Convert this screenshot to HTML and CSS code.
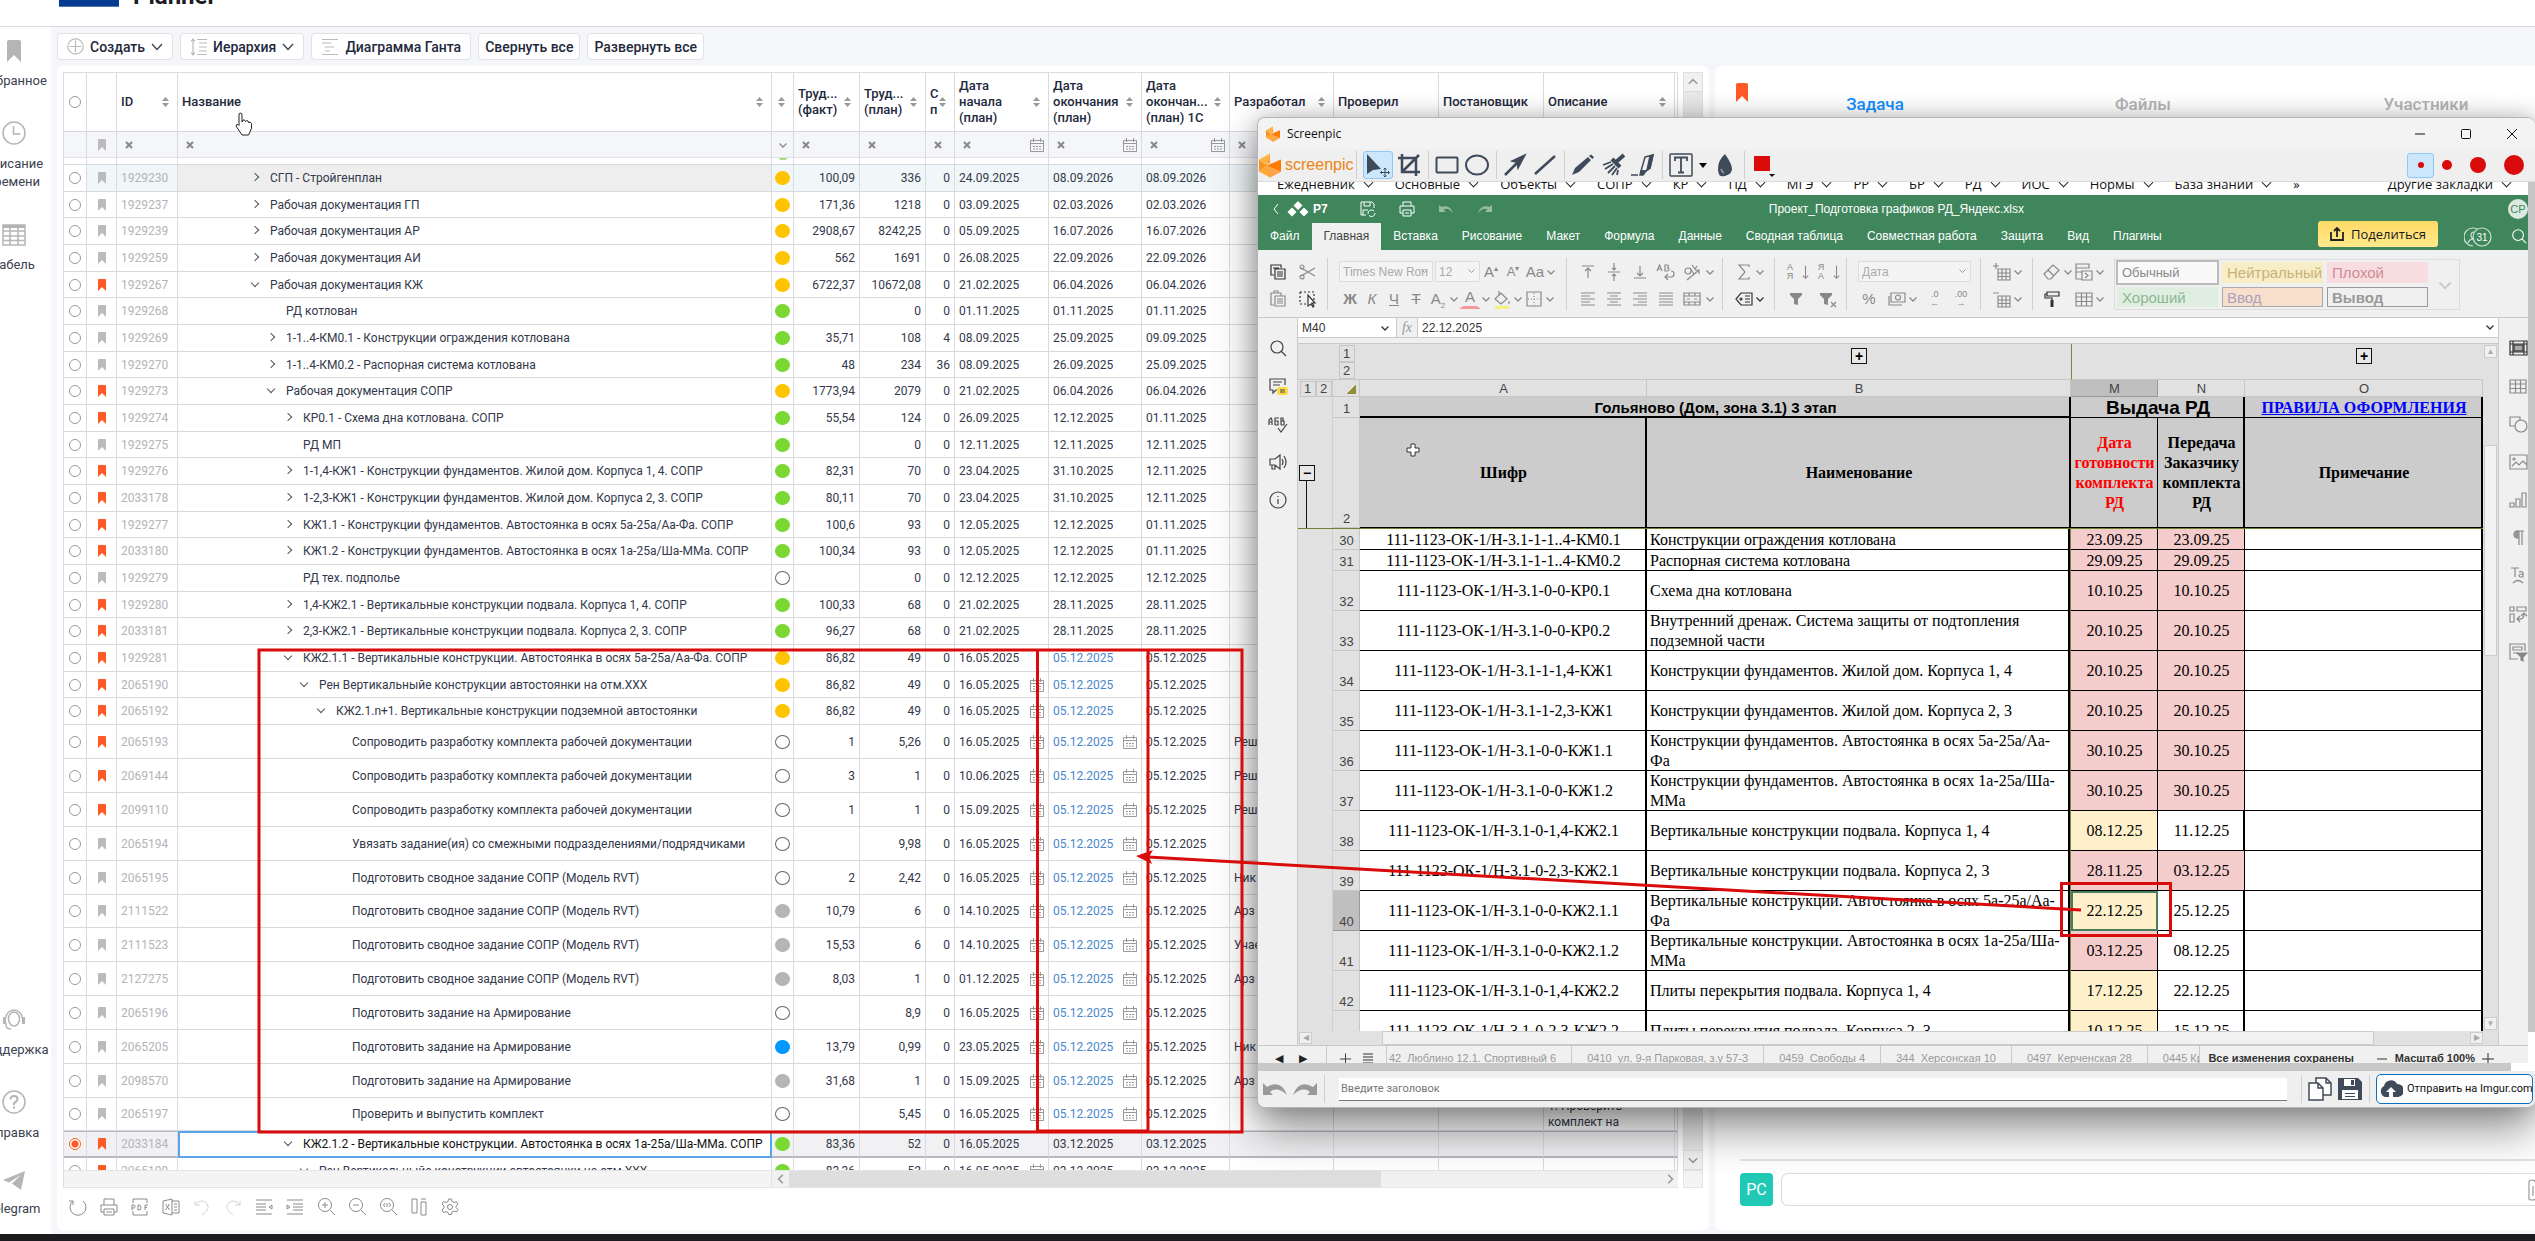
FILE: index.html
```html
<!DOCTYPE html>
<html lang="ru">
<head>
<meta charset="utf-8">
<title>Planner</title>
<link rel="stylesheet" href="styles.css">
</head>
<body>
<svg class="sprite" aria-hidden="true">
  <symbol id="mark" viewBox="0 0 14 22"><path d="M2 0h10q2 0 2 2v20l-7-7-7 7V2q0-2 2-2z" fill="currentColor"/></symbol>
  <symbol id="chev" viewBox="0 0 10 10"><path d="M1.500 3.500 5 7l3.500-3.500" fill="none" stroke="currentColor" stroke-width="1.300"/></symbol>
  <symbol id="hex" viewBox="0 0 22 24"><path d="M11 0 0 6l8 6z" fill="#ffb347"/><path d="M0 6v12l8-6z" fill="#f7931e"/><path d="M0 18l11 6-3-12z" fill="#ffa833"/><path d="M11 0v9l-3 3z" fill="#ff9b1f"/><path d="M8 12l14-6v12l-11 6z" fill="#ff7b00"/><path d="M8 12l14 6-11 6z" fill="#ffa64d"/></symbol>
  <symbol id="grid" viewBox="0 0 20 20"><path d="M2 4h16v13H2zM2 8h16M2 12.500h16M7.500 4v13M12.500 4v13" fill="none" stroke="currentColor" stroke-width="1.200"/></symbol>
  <symbol id="find" viewBox="0 0 20 20"><circle cx="9" cy="9" r="6" fill="none" stroke="currentColor" stroke-width="1.200"/><path d="M13.500 13.500 18 18" stroke="currentColor" stroke-width="1.200"/></symbol>
</svg>

<header class="top">
  <span class="logo"></span>
  <span class="brand">Planner</span>
</header>

<div class="app">
  <nav class="side">
    <a href="#"><svg width="14" height="22"><use href="#mark"/></svg>Избранное</a>
    <a href="#"><svg width="24" height="24" viewBox="0 0 24 24" fill="none" stroke="currentColor" stroke-width="1.500"><circle cx="12" cy="12" r="11"/><path d="M11.500 5v8h7"/></svg>Списание времени</a>
    <a href="#"><svg width="24" height="22" viewBox="0 0 24 22" fill="none" stroke="currentColor" stroke-width="1.500"><path d="M1 1h22v20H1zM1 7h22M1 12h22M1 16.500h22M8 4v17M16 4v17"/><path d="M1 2.500h22" stroke-width="3"/></svg>Табель</a>
    <span class="grow"></span>
    <a href="#"><svg width="24" height="22" viewBox="0 0 24 22" fill="none" stroke="currentColor" stroke-width="1.500"><ellipse cx="12" cy="10" rx="5.500" ry="7"/><path d="M4 9a8 8 0 0 1 16 0M4 14v2q0 4 5 4"/><path d="M2.500 8v7M21.500 8v7" stroke-width="3"/></svg>Поддержка</a>
    <a href="#"><svg width="24" height="24" viewBox="0 0 24 24" fill="none" stroke="currentColor" stroke-width="1.500"><circle cx="12" cy="12" r="11"/><path d="M8.500 9.500q0-3.500 3.500-3.500t3.500 3q0 2-2 3t-1.500 3" stroke-width="2"/><path d="M12 16.500v2" stroke-width="2"/></svg>Справка</a>
    <a href="#"><svg width="22" height="19" viewBox="0 0 22 19"><path d="M22 0 0 9l6 2.500L18 4 9 12.500l9 6.500z" fill="currentColor"/></svg>Telegram</a>
  </nav>

  <main class="work">
    <div class="actions">
      <button><svg width="17" height="17" viewBox="0 0 17 17" fill="none" stroke="#bbb" stroke-width="1.200"><circle cx="8.500" cy="8.500" r="7.700"/><path d="M8.500 2.500v12M2.500 8.500h12"/></svg><span>Создать</span><svg width="12" height="8" viewBox="0 0 12 8" fill="none" stroke="#3c4150" stroke-width="1.300"><path d="M1 1l5 5.500L11 1"/></svg></button>
      <button><svg width="17" height="18" viewBox="0 0 17 18" fill="none" stroke="#bbb" stroke-width="1.200"><path d="M3 1v16M1 3.500 3 1l2 2.500M1 14.500 3 17l2-2.500M7 1.500h10M9 5h8M9 9h8M9 13h8M7 16.500h10"/></svg><span>Иерархия</span><svg width="12" height="8" viewBox="0 0 12 8" fill="none" stroke="#3c4150" stroke-width="1.300"><path d="M1 1l5 5.500L11 1"/></svg></button>
      <button><svg width="18" height="18" viewBox="0 0 18 18" fill="none" stroke="#bbb" stroke-width="1.200"><path d="M1 1.500h16M1 5h9M4 9h9M4 13h5M1 16.500h16"/></svg><span>Диаграмма Ганта</span></button>
      <button class="plain">Свернуть все</button>
      <button class="plain">Развернуть все</button>
    </div>
    <div class="panels">
      <section class="tasks">
        <div class="gridbox">
          <div class="gridclip">
            <table class="gantt">
              <colgroup><col class="w23"><col class="w30"><col class="w61"><col><col class="w22"><col class="w66"><col class="w66"><col class="w29"><col class="w94"><col class="w93"><col class="w88"><col class="w104"><col class="w105"><col class="w105"><col class="w131"><col class="w3"></colgroup>
              <thead>
                <tr class="heads"><th><input type="radio" name="all" aria-label="Все"><th><th class="so">ID<th class="so">Название<th class="so"><th class="so">Труд...<br>(факт)<th class="so">Труд...<br>(план)<th class="so">С<br>п<th class="so">Дата<br>начала<br>(план)<th class="so">Дата<br>окончания<br>(план)<th class="so">Дата<br>окончан...<br>(план) 1С<th class="so">Разработал<th>Проверил<th>Постановщик<th class="so">Описание<th>
                <tr class="filters"><td><td class="bm"><td class="fx"><td class="fx"><td class="fv"><svg width="10" height="10"><use href="#chev"/></svg><td class="fx"><td class="fx"><td class="fx"><td class="fx c"><td class="fx c"><td class="fx c"><td class="fx"><td class="fx"><td class="fx"><td class="fx"><td>
              </thead>
              <tbody>
                <tr class="gap"><td><td><td><td><td><span class="sliver"></span><td><td><td><td><td><td><td><td><td><td>
                <tr class="hover"><td><input type="radio" name="row" aria-label="1929230"><td class="bm"><td class="id">1929230<td class="l0 shut">СГП - Стройгенплан<td class="s y"><td class="n">100,09<td class="n">336<td class="n">0<td>24.09.2025<td>08.09.2026<td>08.09.2026<td><td><td><td><td>
                <tr><td><input type="radio" name="row" aria-label="1929237"><td class="bm"><td class="id">1929237<td class="l0 shut">Рабочая документация ГП<td class="s y"><td class="n">171,36<td class="n">1218<td class="n">0<td>03.09.2025<td>02.03.2026<td>02.03.2026<td><td><td><td><td>
                <tr><td><input type="radio" name="row" aria-label="1929239"><td class="bm"><td class="id">1929239<td class="l0 shut">Рабочая документация АР<td class="s y"><td class="n">2908,67<td class="n">8242,25<td class="n">0<td>05.09.2025<td>16.07.2026<td>16.07.2026<td><td><td><td><td>
                <tr><td><input type="radio" name="row" aria-label="1929259"><td class="bm"><td class="id">1929259<td class="l0 shut">Рабочая документация АИ<td class="s y"><td class="n">562<td class="n">1691<td class="n">0<td>26.08.2025<td>22.09.2026<td>22.09.2026<td><td><td><td><td>
                <tr><td><input type="radio" name="row" aria-label="1929267"><td class="bm on"><td class="id">1929267<td class="l0 open">Рабочая документация КЖ<td class="s y"><td class="n">6722,37<td class="n">10672,08<td class="n">0<td>21.02.2025<td>06.04.2026<td>06.04.2026<td><td><td><td><td>
                <tr><td><input type="radio" name="row" aria-label="1929268"><td class="bm"><td class="id">1929268<td class="l1">РД котлован<td class="s g"><td class="n"><td class="n">0<td class="n">0<td>01.11.2025<td>01.11.2025<td>01.11.2025<td><td><td><td><td>
                <tr><td><input type="radio" name="row" aria-label="1929269"><td class="bm"><td class="id">1929269<td class="l1 shut">1-1..4-КМ0.1 - Конструкции ограждения котлована<td class="s g"><td class="n">35,71<td class="n">108<td class="n">4<td>08.09.2025<td>25.09.2025<td>09.09.2025<td><td><td><td><td>
                <tr><td><input type="radio" name="row" aria-label="1929270"><td class="bm"><td class="id">1929270<td class="l1 shut">1-1..4-КМ0.2 - Распорная система котлована<td class="s g"><td class="n">48<td class="n">234<td class="n">36<td>08.09.2025<td>26.09.2025<td>25.09.2025<td><td><td><td><td>
                <tr><td><input type="radio" name="row" aria-label="1929273"><td class="bm on"><td class="id">1929273<td class="l1 open">Рабочая документация СОПР<td class="s y"><td class="n">1773,94<td class="n">2079<td class="n">0<td>21.02.2025<td>06.04.2026<td>06.04.2026<td><td><td><td><td>
                <tr><td><input type="radio" name="row" aria-label="1929274"><td class="bm on"><td class="id">1929274<td class="l2 shut">КР0.1 - Схема дна котлована. СОПР<td class="s g"><td class="n">55,54<td class="n">124<td class="n">0<td>26.09.2025<td>12.12.2025<td>01.11.2025<td><td><td><td><td>
                <tr><td><input type="radio" name="row" aria-label="1929275"><td class="bm"><td class="id">1929275<td class="l2">РД МП<td class="s g"><td class="n"><td class="n">0<td class="n">0<td>12.11.2025<td>12.11.2025<td>12.11.2025<td><td><td><td><td>
                <tr><td><input type="radio" name="row" aria-label="1929276"><td class="bm on"><td class="id">1929276<td class="l2 shut">1-1,4-КЖ1 - Конструкции фундаментов. Жилой дом. Корпуса 1, 4. СОПР<td class="s g"><td class="n">82,31<td class="n">70<td class="n">0<td>23.04.2025<td>31.10.2025<td>12.11.2025<td><td><td><td><td>
                <tr><td><input type="radio" name="row" aria-label="2033178"><td class="bm on"><td class="id">2033178<td class="l2 shut">1-2,3-КЖ1 - Конструкции фундаментов. Жилой дом. Корпуса 2, 3. СОПР<td class="s g"><td class="n">80,11<td class="n">70<td class="n">0<td>23.04.2025<td>31.10.2025<td>12.11.2025<td><td><td><td><td>
                <tr><td><input type="radio" name="row" aria-label="1929277"><td class="bm on"><td class="id">1929277<td class="l2 shut">КЖ1.1 - Конструкции фундаментов. Автостоянка в осях 5а-25а/Аа-Фа. СОПР<td class="s g"><td class="n">100,6<td class="n">93<td class="n">0<td>12.05.2025<td>12.12.2025<td>01.11.2025<td><td><td><td><td>
                <tr><td><input type="radio" name="row" aria-label="2033180"><td class="bm on"><td class="id">2033180<td class="l2 shut">КЖ1.2 - Конструкции фундаментов. Автостоянка в осях 1а-25а/Ша-ММа. СОПР<td class="s g"><td class="n">100,34<td class="n">93<td class="n">0<td>12.05.2025<td>12.12.2025<td>01.11.2025<td><td><td><td><td>
                <tr><td><input type="radio" name="row" aria-label="1929279"><td class="bm"><td class="id">1929279<td class="l2">РД тех. подполье<td class="s"><td class="n"><td class="n">0<td class="n">0<td>12.12.2025<td>12.12.2025<td>12.12.2025<td><td><td><td><td>
                <tr><td><input type="radio" name="row" aria-label="1929280"><td class="bm on"><td class="id">1929280<td class="l2 shut">1,4-КЖ2.1 - Вертикальные конструкции подвала. Корпуса 1, 4. СОПР<td class="s g"><td class="n">100,33<td class="n">68<td class="n">0<td>21.02.2025<td>28.11.2025<td>28.11.2025<td><td><td><td><td>
                <tr><td><input type="radio" name="row" aria-label="2033181"><td class="bm on"><td class="id">2033181<td class="l2 shut">2,3-КЖ2.1 - Вертикальные конструкции подвала. Корпуса 2, 3. СОПР<td class="s g"><td class="n">96,27<td class="n">68<td class="n">0<td>21.02.2025<td>28.11.2025<td>28.11.2025<td><td><td><td><td>
                <tr><td><input type="radio" name="row" aria-label="1929281"><td class="bm on"><td class="id">1929281<td class="l2 open">КЖ2.1.1 - Вертикальные конструкции. Автостоянка в осях 5а-25а/Аа-Фа. СОПР<td class="s y"><td class="n">86,82<td class="n">49<td class="n">0<td>16.05.2025<td class="k">05.12.2025<td>05.12.2025<td><td><td><td><td>
                <tr><td><input type="radio" name="row" aria-label="2065190"><td class="bm on"><td class="id">2065190<td class="l3 open">Рен Вертикальныйе конструкции автостоянки на отм.ХХХ<td class="s y"><td class="n">86,82<td class="n">49<td class="n">0<td class="c">16.05.2025<td class="k">05.12.2025<td>05.12.2025<td><td><td><td><td>
                <tr><td><input type="radio" name="row" aria-label="2065192"><td class="bm on"><td class="id">2065192<td class="l4 open">КЖ2.1.n+1. Вертикальные конструкции подземной автостоянки<td class="s y"><td class="n">86,82<td class="n">49<td class="n">0<td class="c">16.05.2025<td class="k">05.12.2025<td>05.12.2025<td><td><td><td><td>
              </tbody>
              <tbody class="tall">
                <tr><td><input type="radio" name="row" aria-label="2065193"><td class="bm on"><td class="id">2065193<td class="l5">Сопроводить разработку комплекта рабочей документации<td class="s"><td class="n">1<td class="n">5,26<td class="n">0<td class="c">16.05.2025<td class="k c">05.12.2025<td>05.12.2025<td>Реш<td><td><td><td>
                <tr><td><input type="radio" name="row" aria-label="2069144"><td class="bm on"><td class="id">2069144<td class="l5">Сопроводить разработку комплекта рабочей документации<td class="s"><td class="n">3<td class="n">1<td class="n">0<td class="c">10.06.2025<td class="k c">05.12.2025<td>05.12.2025<td>Реш<td><td><td><td>
                <tr><td><input type="radio" name="row" aria-label="2099110"><td class="bm on"><td class="id">2099110<td class="l5">Сопроводить разработку комплекта рабочей документации<td class="s"><td class="n">1<td class="n">1<td class="n">0<td class="c">15.09.2025<td class="k c">05.12.2025<td>05.12.2025<td>Реш<td><td><td><td>
                <tr><td><input type="radio" name="row" aria-label="2065194"><td class="bm"><td class="id">2065194<td class="l5">Увязать задание(ия) со смежными подразделениями/подрядчиками<td class="s"><td class="n"><td class="n">9,98<td class="n">0<td class="c">16.05.2025<td class="k c">05.12.2025<td>05.12.2025<td><td><td><td><td>
                <tr><td><input type="radio" name="row" aria-label="2065195"><td class="bm"><td class="id">2065195<td class="l5">Подготовить сводное задание СОПР (Модель RVT)<td class="s"><td class="n">2<td class="n">2,42<td class="n">0<td class="c">16.05.2025<td class="k c">05.12.2025<td>05.12.2025<td>Ник<td><td><td><td>
                <tr><td><input type="radio" name="row" aria-label="2111522"><td class="bm"><td class="id">2111522<td class="l5">Подготовить сводное задание СОПР (Модель RVT)<td class="s x"><td class="n">10,79<td class="n">6<td class="n">0<td class="c">14.10.2025<td class="k c">05.12.2025<td>05.12.2025<td>Арз<td><td><td><td>
                <tr><td><input type="radio" name="row" aria-label="2111523"><td class="bm"><td class="id">2111523<td class="l5">Подготовить сводное задание СОПР (Модель RVT)<td class="s x"><td class="n">15,53<td class="n">6<td class="n">0<td class="c">14.10.2025<td class="k c">05.12.2025<td>05.12.2025<td>Учае<td><td><td><td>
                <tr><td><input type="radio" name="row" aria-label="2127275"><td class="bm"><td class="id">2127275<td class="l5">Подготовить сводное задание СОПР (Модель RVT)<td class="s x"><td class="n">8,03<td class="n">1<td class="n">0<td class="c">01.12.2025<td class="k c">05.12.2025<td>05.12.2025<td>Арз<td><td><td><td>
                <tr><td><input type="radio" name="row" aria-label="2065196"><td class="bm"><td class="id">2065196<td class="l5">Подготовить задание на Армирование<td class="s"><td class="n"><td class="n">8,9<td class="n">0<td class="c">16.05.2025<td class="k c">05.12.2025<td>05.12.2025<td><td><td><td><td>
                <tr><td><input type="radio" name="row" aria-label="2065205"><td class="bm"><td class="id">2065205<td class="l5">Подготовить задание на Армирование<td class="s blue"><td class="n">13,79<td class="n">0,99<td class="n">0<td class="c">23.05.2025<td class="k c">05.12.2025<td>05.12.2025<td>Ник<td><td><td><td>
                <tr><td><input type="radio" name="row" aria-label="2098570"><td class="bm"><td class="id">2098570<td class="l5">Подготовить задание на Армирование<td class="s x"><td class="n">31,68<td class="n">1<td class="n">0<td class="c">15.09.2025<td class="k c">05.12.2025<td>05.12.2025<td>Арз<td><td><td><td>
                <tr><td><input type="radio" name="row" aria-label="2065197"><td class="bm"><td class="id">2065197<td class="l5">Проверить и выпустить комплект<td class="s"><td class="n"><td class="n">5,45<td class="n">0<td class="c">16.05.2025<td class="k c">05.12.2025<td>05.12.2025<td><td><td><td>1. Проверить<br>комплект на<td>
              </tbody>
              <tbody>
                <tr class="sel"><td><input type="radio" name="row" aria-label="2033184" checked><td class="bm on"><td class="id">2033184<td class="l2 open cur">КЖ2.1.2 - Вертикальные конструкции. Автостоянка в осях 1а-25а/Ша-ММа. СОПР<td class="s g"><td class="n">83,36<td class="n">52<td class="n">0<td>16.05.2025<td>03.12.2025<td>03.12.2025<td><td><td><td><td>
                <tr><td><input type="radio" name="row" aria-label="2065199"><td class="bm on"><td class="id">2065199<td class="l3 open">Рен Вертикальныйе конструкции автостоянки на отм.ХХХ<td class="s g"><td class="n">83,36<td class="n">52<td class="n">0<td class="c">16.05.2025<td>03.12.2025<td>03.12.2025<td><td><td><td><td>
              </tbody>
            </table>
          </div>
          <div class="vbar"><button aria-label="Вверх"><svg class="up" width="12" height="12"><use href="#chev"/></svg></button><span class="vthumb"></span><button aria-label="Вниз"><svg width="12" height="12"><use href="#chev"/></svg></button></div>
        </div>
        <div class="hbox">
          <div class="hbar"><span class="hstart"></span><button aria-label="Влево"><svg class="lf" width="12" height="12"><use href="#chev"/></svg></button><span class="hthumb"></span><span class="grow"></span><button aria-label="Вправо"><svg class="rt" width="12" height="12"><use href="#chev"/></svg></button></div>
          <span class="corner"></span>
        </div>
        <div class="tools">
          <svg viewBox="0 0 20 20"><path d="M5 4a8 8 0 1 0 10 0M5 8V4H1"/></svg>
          <svg viewBox="0 0 20 20"><path d="M5 8V2h10v6M5 15H2V8h16v7h-3M5 12h10v6H5zM7 15h6"/></svg>
          <svg viewBox="0 0 20 20"><path d="M3 6V2h14v4M3 14v4h14v-4"/><path d="M2 13V8h2q1 0 1 1.500T4 11H2M8 8v5h1q2 0 2-2.500T9 8zM15 13V8h3M15 10.500h2"/></svg>
          <svg viewBox="0 0 20 20"><path d="M11 2 2 4v12l9 2zM11 4h7v12h-7M4.500 7l4 6M8.500 7l-4 6M13 7h3M13 10h3M13 13h3"/></svg>
          <svg class="dim" viewBox="0 0 20 20"><path d="M3 4v4h5M3 8q4-5 8-4t5 5-6 9"/></svg>
          <svg class="dim" viewBox="0 0 20 20"><path d="M17 4v4h-5M17 8q-4-5-8-4T4 9t6 9"/></svg>
          <svg viewBox="0 0 20 20"><path d="M2 3h16M2 7h10M2 10h10M2 13h10M2 17h16M18 8l-3 2 3 2z"/></svg>
          <svg viewBox="0 0 20 20"><path d="M2 3h16M8 7h10M8 10h10M8 13h10M2 17h16M2 8l3 2-3 2z"/></svg>
          <svg viewBox="0 0 20 20"><circle cx="9" cy="8" r="6.500"/><path d="M14 13l5 5M9 5v6M6 8h6"/></svg>
          <svg viewBox="0 0 20 20"><circle cx="9" cy="8" r="6.500"/><path d="M14 13l5 5M6 8h6"/></svg>
          <svg viewBox="0 0 20 20"><circle cx="9" cy="8" r="6.500"/><path d="M14 13l5 5M7 6 5.500 8 7 10M11 6l1.500 2L11 10M9 6v4"/></svg>
          <svg viewBox="0 0 20 20"><path d="M3 2h5v14H3zM12 5h5v13h-5zM12 2h5"/></svg>
          <svg viewBox="0 0 20 20"><circle cx="10" cy="10" r="2.500"/><path d="M8.500 2h3l.5 2.500 2 1 2.500-1 1.500 2.500-2 2v1.500l2 2-1.500 2.500-2.500-1-2 1-.5 2.500h-3L8 15.500l-2-1-2.500 1L2 13l2-2V9L2 7l1.500-2.500 2.500 1 2-1z"/></svg>
        </div>
      </section>
      <aside class="detail">
        <div class="dhead">
          <svg class="flag" width="12" height="21"><use href="#mark"/></svg>
          <nav class="dtabs"><a class="act" href="#">Задача</a><a href="#">Файлы</a><a href="#">Участники</a></nav>
        </div>
        <div class="comment">
          <span class="ava">PC</span>
          <input type="text" aria-label="Комментарий">
          <svg class="clip" width="9" height="22" viewBox="0 0 9 22" fill="none" stroke="#999" stroke-width="1.200"><path d="M1 3q0-2 3-2t4 3v15q0 2-4 2T1 18zM5 7v10"/></svg>
        </div>
      </aside>
    </div>
  </main>
</div>
<div class="dock"></div>

<section class="win" aria-label="Screenpic">
  <div class="caption"><svg width="14" height="16"><use href="#hex"/></svg><span>Screenpic</span>
    <button aria-label="Свернуть"><svg viewBox="0 0 12 12"><path d="M1 6h10"/></svg></button>
    <button aria-label="Развернуть"><svg viewBox="0 0 12 12"><rect x="1.500" y="1.500" width="9" height="9" rx="1"/></svg></button>
    <button aria-label="Закрыть"><svg viewBox="0 0 12 12"><path d="M1 1l10 10M11 1 1 11"/></svg></button>
  </div>
  <div class="paint">
    <svg class="ph" width="22" height="25"><use href="#hex"/></svg><span class="pname">screenpic</span><i></i>
    <button class="on" aria-label="Выбор"><svg width="30" height="28" viewBox="0 0 30 28"><path d="M4 3v20l6-4 8-1z" fill="#3f4a5a"/><path d="M22 17v9M17.500 21.500h9M20.500 18.500 22 17l1.500 1.500M20.500 24.500 22 26l1.500-1.500M19 20l-1.500 1.500L19 23M25 20l1.500 1.500L25 23" fill="none" stroke="#3f4a5a"/></svg></button>
    <svg class="gl" viewBox="0 0 24 24"><path d="M5 1v18h18M1 5h18v18M5 19 22 2" stroke-width="2.500"/></svg><i></i>
    <svg class="gl" viewBox="0 0 24 24"><rect x="1.500" y="4.500" width="21" height="15" rx="1" stroke-width="2"/></svg>
    <svg class="gl" viewBox="0 0 24 24"><ellipse cx="12" cy="12" rx="11" ry="9.500" stroke-width="2"/></svg><i></i>
    <svg class="gl" viewBox="0 0 24 24"><path d="M2 22 16 8" stroke-width="2.500"/><path d="M22 2 9 8l4 1 1 1 1 5z" fill="#3f4a5a"/></svg>
    <svg class="gl" viewBox="0 0 24 24"><path d="M2 21 22 3" stroke-width="2.500"/></svg><i></i>
    <svg class="gl" viewBox="0 0 24 24"><path d="M1 22l3-7 13-11 3 3L8 19zM18 3l2-1.500L23 4l-1.500 2z" fill="#3f4a5a" stroke="none"/></svg>
    <svg class="gl" viewBox="0 0 24 24"><path d="M23 2 15 9M11 6l8 8" stroke-width="4"/><path d="M10 9 2 12M12 11l-8 5M14 13l-7 7M16 15l-5 7M17 17l-1 5" stroke-width="1.800"/></svg>
    <svg class="gl" viewBox="0 0 24 24"><path d="M14 4l8-2-3 13-4 3h-5z"/><path d="M19 3l3-1-3 13-3 2zM10 18h5l-3 4H9z" fill="#3f4a5a"/><path d="M0 22h7" stroke-width="1.500"/></svg><i></i>
    <svg class="gl" viewBox="0 0 24 24"><rect x="1" y="1" width="22" height="22" rx="1"/><path d="M6 8V4.500h12V8M12 4.500v15M9 19.500h6" stroke-width="1.800"/></svg>
    <svg class="car" viewBox="0 0 8 5"><path d="M0 0h8L4 5z"/></svg>
    <svg class="gl" viewBox="0 0 24 24"><path d="M12 1q7 10 7 15t-7 7-7-7T12 1z" fill="#3f4a5a" stroke="none"/><path d="M8 16q1 3 3 4" stroke="#9aa3b0"/></svg><i></i>
    <svg class="gl" viewBox="0 0 24 24"><rect x="3" y="3" width="16" height="15" fill="#d90b0b" stroke="none"/><path d="M18 21h6l-3 3z" fill="#111" stroke="none"/></svg>
    <span class="grow"></span>
    <button class="sz on" aria-label="1"><b class="d5"></b></button><b class="d10"></b><b class="d16"></b><b class="d20"></b>
  </div>

  <div class="shot">
    <div class="page">
      <div class="marks"><a href="#">Ежедневник</a><a href="#">Основные</a><a href="#">Объекты</a><a href="#">СОПР</a><a href="#">КР</a><a href="#">ПД</a><a href="#">МГЭ</a><a href="#">РР</a><a href="#">БР</a><a href="#">РД</a><a href="#">ИОС</a><a href="#">Нормы</a><a href="#">База знаний</a><a href="#" class="bare">»</a><span class="grow"></span><a href="#">Другие закладки</a></div>

      <div class="green">
        <div class="gtitle">
          <svg width="8" height="12" viewBox="0 0 8 12"><path d="M6 1 2 6l4 5"/></svg>
          <svg class="p7" width="22" height="16" viewBox="0 0 22 16"><path d="M11 0l4.500 4.500L11 9 6.500 4.500zM5 6.500l4.500 4.500L5 15.500.500 11zM17 6.500l4.500 4.500-4.500 4.500-4.500-4.500z" fill="#fff" stroke="none"/></svg>
          <b>Р7</b>
          <svg class="gsave" width="16" height="16" viewBox="0 0 16 16"><path d="M6 14H1V1h11l2 2v4M4 1v4h6V1M3 14V9h5"/><path d="M8 13a3.500 3.500 0 0 1 6-3M15 12a3.500 3.500 0 0 1-6 2.500"/></svg>
          <svg width="16" height="16" viewBox="0 0 16 16"><path d="M4 5V1h8v4M4 12H1V5h14v7h-3M4 9h8v6H4zM6 12h4"/></svg>
          <svg class="half" width="16" height="16" viewBox="0 0 16 16"><path d="M1 4v7h7L5.500 8.500Q10 6 15 12 12 3 3.500 6z" fill="#fff" stroke="none"/></svg>
          <svg class="half" width="16" height="16" viewBox="0 0 16 16"><path d="M15 4v7H8l2.500-2.500Q6 6 1 12 4 3 12.500 6z" fill="#fff" stroke="none"/></svg>
          <span class="fname">Проект_Подготовка графиков РД_Яндекс.xlsx</span>
          <span class="cp">СР</span>
        </div>
        <nav class="gtabs"><a href="#">Файл</a><a class="act" href="#">Главная</a><a href="#">Вставка</a><a href="#">Рисование</a><a href="#">Макет</a><a href="#">Формула</a><a href="#">Данные</a><a href="#">Сводная таблица</a><a href="#">Совместная работа</a><a href="#">Защита</a><a href="#">Вид</a><a href="#">Плагины</a><span class="grow"></span>
          <button class="share"><svg width="14" height="14" viewBox="0 0 14 14" fill="none" stroke="#222" stroke-width="1.800"><path d="M1 5v8h12V5M7 10V2M4 4l3-3 3 3"/></svg>Поделиться</button>
          <svg class="usr" width="28" height="20" viewBox="0 0 28 20" fill="none" stroke="#cfe3d6" stroke-width="1.200"><path d="M9 19A9 9 0 0 1 9 1q3 0 5 1.500M10 5a3 3.500 0 1 0 0 7M4 16q1-4 6-4"/><circle cx="18" cy="10" r="9"/><text x="18" y="14" text-anchor="middle" class="u31">31</text></svg>
          <svg class="gs" width="18" height="18"><use href="#find"/></svg>
        </nav>
      </div>

      <div class="ribbon">
        <div class="grp g1"><div>
          <svg class="dk" viewBox="0 0 20 20"><path d="M6 13H3V3h10v3M5 6h6M7 7h10v10H7zM9 10h6M9 12h6M9 14h6"/></svg>
          <svg viewBox="0 0 20 20"><path d="M3 6l14 8M3 14l14-8"/><circle cx="4" cy="5" r="2"/><circle cx="4" cy="15" r="2"/></svg></div><div>
          <svg viewBox="0 0 20 20"><path d="M6 16H3V4h10v3M6 4V2h4v2M7 7h10v10H7zM9 10h6M9 12h6M9 14h6"/></svg>
          <svg class="dk" viewBox="0 0 20 20"><path d="M2 3h14v8M2 3v12h8" stroke-dasharray="2 2"/><path d="M10 6v11l3-2 2 3 1-1-2-3h3z" fill="#fff"/></svg></div></div>
        <div class="grp g2"><div>
          <select class="s94" aria-label="Шрифт"><option>Times New Ron</option></select><select class="s45" aria-label="Размер"><option>12</option></select>
          <span class="ch">A<sup>▴</sup></span><span class="ch sm">A<sup>▾</sup></span><span class="ch">Aa</span><svg class="cv"><use href="#chev"/></svg></div><div>
          <span class="ch"><b>Ж</b></span><span class="ch"><em>К</em></span><span class="ch"><u>Ч</u></span><span class="ch"><s>Т</s></span><span class="ch">A<sub>2</sub></span><svg class="cv"><use href="#chev"/></svg><span class="ch fr">A</span><svg class="cv"><use href="#chev"/></svg><span class="ch fy"><svg viewBox="0 0 20 20"><path d="M3 10l6-6 6 6-6 5zM7 2v5M17 12v3"/></svg></span><svg class="cv"><use href="#chev"/></svg><span class="ch"><svg viewBox="0 0 20 20"><path d="M3 3h14v14H3z"/><path d="M10 4v13M4 10h13" stroke-dasharray="1 2"/></svg></span><svg class="cv"><use href="#chev"/></svg></div></div>
        <div class="grp g3"><div>
          <svg viewBox="0 0 20 20"><path d="M4 4h12M10 6v10M7 9l3-3 3 3"/></svg><svg viewBox="0 0 20 20"><path d="M4 10h12M10 1v7M8 6l2 2 2-2M10 19v-7M8 14l2-2 2 2"/></svg><svg viewBox="0 0 20 20"><path d="M4 16h12M10 4v10M7 11l3 3 3-3"/></svg><svg viewBox="0 0 20 20"><path d="M1 9l2.500-6L6 9M2 7h3M9 3v6h2q2 0 2-1.500T11 6q1.500 0 1.500-1.500T11 3zM15 9q3 0 3 3t-3 3H9M12 12l-3 3 3 3"/></svg><svg viewBox="0 0 20 20"><circle cx="6" cy="9" r="3"/><path d="M8 6l4 6M10 3l3 4 2-3M5 18 17 8M17 12V8h-4"/></svg><svg class="cv"><use href="#chev"/></svg></div><div>
          <svg viewBox="0 0 20 20"><path d="M3 4h14M3 7h9M3 10h14M3 13h9M3 16h14"/></svg><svg viewBox="0 0 20 20"><path d="M3 4h14M6 7h8M3 10h14M6 13h8M3 16h14"/></svg><svg viewBox="0 0 20 20"><path d="M3 4h14M8 7h9M3 10h14M8 13h9M3 16h14"/></svg><svg viewBox="0 0 20 20"><path d="M3 4h14M3 7h14M3 10h14M3 13h14M3 16h14"/></svg><svg viewBox="0 0 20 20"><path d="M2 4h16v12H2zM2 7h16M2 13h16M7 4v3M13 4v3M7 13v3M13 13v3M5 10h3M12 10h3"/></svg><svg class="cv"><use href="#chev"/></svg></div></div>
        <div class="grp g4"><div><svg viewBox="0 0 20 20"><path d="M15 5V3H5l6 7-6 7h10v-2"/></svg><svg class="cv"><use href="#chev"/></svg></div><div class="dk"><svg class="dk" viewBox="0 0 20 20"><path d="M7 4h11v12H7l-5-6zM11 7h5M11 10h5M11 13h5"/><circle cx="7" cy="10" r="1"/></svg><svg class="cv"><use href="#chev"/></svg></div></div>
        <div class="grp g5"><div><span class="az">А<br>Я</span><svg class="ar" viewBox="0 0 10 20"><path d="M5 3v14M2 14l3 3 3-3"/></svg><span class="az">Я<br>А</span><svg class="ar" viewBox="0 0 10 20"><path d="M5 3v14M2 14l3 3 3-3"/></svg></div><div><svg viewBox="0 0 20 20"><path d="M4 4h12v2l-4 4v6l-4-1v-5L4 6z" fill="#888" stroke="none"/></svg><svg viewBox="0 0 20 20"><path d="M2 4h12v2l-4 4v6l-4-1v-5L2 6z" fill="#888" stroke="none"/><path d="M13 13l5 5M18 13l-5 5"/></svg></div></div>
        <div class="grp g6"><div><select class="s113" aria-label="Формат"><option>Дата</option></select></div><div><span class="ch">%</span><span class="duo"><svg viewBox="0 0 20 20"><path d="M4 4h14v9H4zM2 7v9h13"/><circle cx="11" cy="8.500" r="2.500"/></svg><svg class="cv"><use href="#chev"/></svg></span><span class="az">.0<br>←</span><span class="az">.00<br>→</span></div></div>
        <div class="grp g7"><div><svg viewBox="0 0 20 20"><path d="M6 7h12v11H6zM6 11h12M6 14.500h12M10 7v11M14 7v11M4 1v6M1 4h6"/></svg><svg class="cv"><use href="#chev"/></svg></div><div><svg viewBox="0 0 20 20"><path d="M6 7h12v11H6zM6 11h12M6 14.500h12M10 7v11M14 7v11M1 4h6"/></svg><svg class="cv"><use href="#chev"/></svg></div></div>
        <div class="grp g8"><div><svg viewBox="0 0 20 20"><path d="M2 12 11 3l6 5-8 9H6zM6 8l6 6"/></svg><svg class="cv"><use href="#chev"/></svg><svg viewBox="0 0 20 20"><path d="M2 2h13v4H2zM2 6v11h6M2 10h6M8 9h10v9H8zM11 11l3 2.500-3 2.500"/></svg><svg class="cv"><use href="#chev"/></svg></div><div><svg class="dk" viewBox="0 0 20 20"><path d="M5 3h12v4H5zM5 5H3v4h7v3"/><path d="M10 11v7" stroke-width="3"/></svg><svg class="cv"></svg><svg viewBox="0 0 20 20"><use href="#grid"/></svg><svg class="cv"><use href="#chev"/></svg></div></div>
        <div class="styles"><span class="st normal">Обычный</span><span class="st neutral">Нейтральный</span><span class="st bad">Плохой</span><span class="st good">Хороший</span><span class="st enter">Ввод</span><span class="st result">Вывод</span><svg viewBox="0 0 10 10"><use href="#chev"/></svg></div>
      </div>

      <div class="deck">
        <nav class="lrail">
          <svg viewBox="0 0 20 20"><use href="#find"/></svg>
          <svg viewBox="0 0 20 20"><path d="M17 9V3H2v11h3v3l3-3h2M5 6h9M5 9h7"/><rect x="9" y="11" width="11" height="8" rx="2" fill="#ffd84a" stroke="none"/><path d="M12 14h5M12 16h5"/></svg>
          <svg viewBox="0 0 20 20"><path d="M1 11V6l2-2 1 2v5M1 8h3M7 11V4h4M7 7h3v4H7M13 11V4h2v3h-2 3v4h-3M10 14l3 4 6-8"/></svg>
          <svg viewBox="0 0 20 20"><path d="M2 7h5l5-4v14l-5-4H2zM4 13v4h3v-4M14 7q2 3 0 6M16 4q4 6 0 12"/></svg>
          <svg viewBox="0 0 20 20"><circle cx="10" cy="10" r="8"/><path d="M10 9v5M10 6v1"/></svg>
        </nav>
        <div class="mid">
          <div class="fbar"><label class="nm"><input type="text" value="M40" aria-label="Имя ячейки"><svg class="cv"><use href="#chev"/></svg></label><em>fx</em><input class="fin" type="text" value="22.12.2025" aria-label="Формула"><svg class="cv fe"><use href="#chev"/></svg></div>
          <div class="sheetrow">
            <div class="sheetclip">
              <table class="sheet">
                <colgroup><col class="c35"><col class="c27"><col class="c287"><col><col class="c87"><col class="c87"><col class="c238"></colgroup>
                <tr class="outl"><td class="gut"><td class="lv"><span>1</span><span>2</span><td><td><span class="pm">+</span><td class="fz" colspan="2"><td><span class="pm">+</span>
                <tr class="cols"><td class="gut"><span>1</span><span>2</span><th class="tri"><th>A<th>B<th class="on">M<th>N<th>O
                <tr class="r1"><td class="gut"><th>1<td colspan="2" class="t1 thick">Гольяново (Дом, зона 3.1) 3 этап<td colspan="2" class="t2 thick">Выдача РД<td class="thick"><a href="#">ПРАВИЛА ОФОРМЛЕНИЯ</a>
                <tr class="r2"><td class="gut"><span class="pm">−</span><th>2<td class="thick">Шифр<td class="thick">Наименование<td class="red">Дата<br>готовности<br>комплекта<br>РД<td class="thick">Передача<br>Заказчику<br>комплекта<br>РД<td class="thick">Примечание
                <tr class="lo"><td class="gut"><th>30<td class="thick">111-1123-ОК-1/Н-3.1-1-1..4-КМ0.1<td class="nmx">Конструкции ограждения котлована<td class="p">23.09.25<td class="p">23.09.25<td class="thick">
                <tr class="lo"><td class="gut"><th>31<td class="thick">111-1123-ОК-1/Н-3.1-1-1..4-КМ0.2<td class="nmx">Распорная система котлована<td class="p">29.09.25<td class="p">29.09.25<td class="thick">
                <tr><td class="gut"><th>32<td class="thick">111-1123-ОК-1/Н-3.1-0-0-КР0.1<td class="nmx">Схема дна котлована<td class="p">10.10.25<td class="p">10.10.25<td class="thick">
                <tr><td class="gut"><th>33<td class="thick">111-1123-ОК-1/Н-3.1-0-0-КР0.2<td class="nmx">Внутренний дренаж. Система защиты от подтопления<br>подземной части<td class="p">20.10.25<td class="p">20.10.25<td class="thick">
                <tr><td class="gut"><th>34<td class="thick">111-1123-ОК-1/Н-3.1-1-1,4-КЖ1<td class="nmx">Конструкции фундаментов. Жилой дом. Корпуса 1, 4<td class="p">20.10.25<td class="p">20.10.25<td class="thick">
                <tr><td class="gut"><th>35<td class="thick">111-1123-ОК-1/Н-3.1-1-2,3-КЖ1<td class="nmx">Конструкции фундаментов. Жилой дом. Корпуса 2, 3<td class="p">20.10.25<td class="p">20.10.25<td class="thick">
                <tr><td class="gut"><th>36<td class="thick">111-1123-ОК-1/Н-3.1-0-0-КЖ1.1<td class="nmx">Конструкции фундаментов. Автостоянка в осях 5а-25а/Аа-<br>Фа<td class="p">30.10.25<td class="p">30.10.25<td class="thick">
                <tr><td class="gut"><th>37<td class="thick">111-1123-ОК-1/Н-3.1-0-0-КЖ1.2<td class="nmx">Конструкции фундаментов. Автостоянка в осях 1а-25а/Ша-<br>ММа<td class="p">30.10.25<td class="p">30.10.25<td class="thick">
                <tr><td class="gut"><th>38<td class="thick">111-1123-ОК-1/Н-3.1-0-1,4-КЖ2.1<td class="nmx">Вертикальные конструкции подвала. Корпуса 1, 4<td class="q">08.12.25<td class="thick">11.12.25<td class="thick">
                <tr><td class="gut"><th>39<td class="thick">111-1123-ОК-1/Н-3.1-0-2,3-КЖ2.1<td class="nmx">Вертикальные конструкции подвала. Корпуса 2, 3<td class="p">28.11.25<td class="p">03.12.25<td class="thick">
                <tr><td class="gut"><th class="on">40<td class="thick">111-1123-ОК-1/Н-3.1-0-0-КЖ2.1.1<td class="nmx">Вертикальные конструкции. Автостоянка в осях 5а-25а/Аа-<br>Фа<td class="q pick">22.12.25<td class="thick">25.12.25<td class="thick">
                <tr><td class="gut"><th>41<td class="thick">111-1123-ОК-1/Н-3.1-0-0-КЖ2.1.2<td class="nmx">Вертикальные конструкции. Автостоянка в осях 1а-25а/Ша-<br>ММа<td class="p">03.12.25<td class="thick">08.12.25<td class="thick">
                <tr><td class="gut"><th>42<td class="thick">111-1123-ОК-1/Н-3.1-0-1,4-КЖ2.2<td class="nmx">Плиты перекрытия подвала. Корпуса 1, 4<td class="q">17.12.25<td class="thick">22.12.25<td class="thick">
                <tr><td class="gut"><th>43<td class="thick">111-1123-ОК-1/Н-3.1-0-2,3-КЖ2.2<td class="nmx">Плиты перекрытия подвала. Корпуса 2, 3<td class="q">10.12.25<td class="thick">15.12.25<td class="thick">
              </table>
            </div>
            <div class="sv"><button aria-label="Вверх">▲</button><span></span><button aria-label="Вниз">▼</button></div>
          </div>
          <div class="sh"><button aria-label="Влево">◀</button><span></span><button aria-label="Вправо">▶</button></div>
        </div>
        <nav class="rrail">
          <svg class="dk" viewBox="0 0 20 20"><path d="M2 3h17v14H2zM2 6h17M2 14h17M5 3v14M16 3v14"/><rect x="6" y="7" width="9" height="6" fill="#aaa"/></svg>
          <svg viewBox="0 0 20 20"><use href="#grid"/></svg>
          <svg viewBox="0 0 20 20"><path d="M7 12H2V3h10v4"/><circle cx="13" cy="12" r="6"/></svg>
          <svg viewBox="0 0 20 20"><path d="M2 3h17v14H2zM4 14l4-4 3 3 4-4 4 4"/><circle cx="6" cy="7" r="1"/></svg>
          <svg viewBox="0 0 20 20"><path d="M2 13h4v4H2zM8 9h4v8H8zM14 3h4v14h-4z"/></svg>
          <svg viewBox="0 0 20 20"><path d="M9 10a4 4 0 0 1 0-7h7M11 3v14M14 3v14"/><path d="M6 6q0-3 4-3v7q-4 0-4-4z" fill="#999"/></svg>
          <svg viewBox="0 0 20 20"><path d="M3 2h8M7 2v9M11 6q3-1 4 1v4h-2q-2 0-2-1.500t4-1.500M5 17q5-5 10 0"/></svg>
          <svg viewBox="0 0 20 20"><path d="M2 3h4v4H2zM9 3h9v4H9zM2 10h4v8H2zM10 15q6 1 6-5M13 12l3-3 3 3M12 12l-3 3 3 3"/></svg>
          <svg viewBox="0 0 20 20"><path d="M10 17H2V2h15v7M5 5h9v3H5zM5 11h5"/><path d="M9 11h10l-4 4v4l-2-1v-3z" fill="#888"/></svg>
        </nav>
      </div>
      <div class="sheets">
        <span class="nav">◀</span><span class="nav">▶</span><span class="add"><svg width="13" height="14" viewBox="0 0 14 14"><path d="M7 1v12M1 7h12"/></svg><svg width="12" height="14" viewBox="0 0 12 14"><path d="M1 2h10M1 5h10M1 8h10M1 11h10"/></svg></span>
        <a class="t0" href="#">42&nbsp; Люблино 12.1. Спортивный 6</a><a href="#">0410&nbsp; ул. 9-я Парковая, з.у 57-3</a><a href="#">0459&nbsp; Свободы 4</a><a href="#">344&nbsp; Херсонская 10</a><a href="#">0497&nbsp; Керченская 28</a><a class="tl" href="#">0445 Кра</a>
        <b class="saved">Все изменения сохранены</b><svg width="12" height="14" viewBox="0 0 12 14"><path d="M1 7h10"/></svg><b>Масштаб 100%</b><svg width="12" height="14" viewBox="0 0 12 14"><path d="M6 1v12M0 7h12"/></svg>
      </div>
    </div>
    <div class="outv"></div>
  </div>
  <div class="outh"></div>
  <div class="send">
    <svg width="24" height="16" viewBox="0 0 24 16"><path d="M0 2v12h10l-3-3q7-6 17 3Q18-2 4 6z" fill="#999"/></svg>
    <svg width="24" height="16" viewBox="0 0 24 16"><path d="M24 2v12H14l3-3q-7-6-17 3Q6-2 20 6z" fill="#999"/></svg><i></i>
    <input type="text" placeholder="Введите заголовок" aria-label="Заголовок"><i></i>
    <svg width="24" height="24" viewBox="0 0 24 24" fill="#fff" stroke="#3f4a5a" stroke-width="1.500"><path d="M8 1h10l5 5v12H8zM18 1v5h5"/><path d="M1 6h9l5 5v12H1zM10 6v5h5"/></svg>
    <svg width="24" height="24" viewBox="0 0 24 24"><path d="M0 1h20l4 4v18H0z" fill="#3f4a5a"/><path d="M6 2h11v7H6zM4 13h16v9H4z" fill="#fff"/><path d="M13 3h3v5h-3zM7 16h10v1H7zM7 19h10v1H7z" fill="#3f4a5a"/></svg><i></i>
    <button class="imgur"><svg width="24" height="20" viewBox="0 0 24 20"><path d="M6 18a6 6 0 0 1-1-11 7 7 0 0 1 13-2 6.500 6.500 0 0 1 1 13z" fill="#3f4a5a"/><path d="M10 20v-7H7l5-5 5 5h-3v7z" fill="#fff"/></svg>Отправить на Imgur.com</button>
  </div>
</section>

<svg class="hand" width="18" height="25" viewBox="0 0 18 25"><path d="M5 2q2 0 2 2v7l1-2q2-.5 2.500 1.500.5-1.500 2.500-.5l.5 1.500q2-1 3 1v5l-3 6.500H7L1 15q0-2 2-1.500l1 1V4q0-2 1-2z" fill="#fff" stroke="#222"/></svg>
<svg class="plus" width="14" height="14" viewBox="0 0 14 14"><path d="M5 1h4v4h4v4H9v4H5V9H1V5h4z" fill="#fff" stroke="#333"/></svg>
<svg class="notes" width="2535" height="1241" viewBox="0 0 2535 1241" fill="none" stroke="#d90b0b" stroke-width="3">
  <path d="M259 650h983v482H259zM1037.500 650h110.500v481h-110.500zM2061.500 883.500h109v52h-109z"/>
  <path d="M2081 910 1148 857"/>
  <path d="M1136 856l17-6-4 7 3 7z" fill="#d90b0b" stroke="none"/>
</svg>
</body>
</html>
```
FILE: styles.css
```css
*, *::before, *::after { box-sizing: border-box; }
html, body { height: 100%; }
body { margin: 0; display: flex; flex-direction: column; overflow: hidden; position: relative; background: #fff; color: #33384a; font: 12px/16px Roboto, "Liberation Sans", sans-serif; }
button, input, select { font: inherit; color: inherit; margin: 0; }
button { padding: 0; border: 0; background: none; }
a { color: inherit; text-decoration: none; }
svg { flex: none; display: block; }
.sprite { position: absolute; width: 0; height: 0; }
.grow { flex: 1; }

/* planner shell */
.top { height: 27px; flex: none; border-bottom: 1px solid #dcdcdc; display: flex; gap: 14px; padding-left: 59px; overflow: hidden; align-items: flex-start; }
.logo { width: 60px; height: 7px; background: #063b92; border-bottom: 1px solid #4f74b3; }
.brand { font: bold 24px/28px Roboto, sans-serif; color: #1c1c24; margin-top: -18px; }
.app { flex: 1; min-height: 0; display: flex; }
.side { width: 75px; margin-left: -24px; flex: none; display: flex; flex-direction: column; padding: 13px 0 16px; font-size: 13px; line-height: 18px; color: #3c4150; }
.side a { display: flex; flex-direction: column; align-items: center; text-align: center; gap: 10px; min-height: 81px; }
.side a:nth-child(3) { margin-top: 22px; }
.side a:last-child { min-height: 45px; }
.side svg { color: #b5b5b5; }
.work { flex: 1; min-width: 0; background: #f4f6fa; padding: 6px 0 4px 6px; display: flex; flex-direction: column; gap: 6px; }
.actions { display: flex; gap: 7px; height: 27px; flex: none; }
.actions button { display: flex; align-items: center; gap: 6px; padding: 0 9px; background: #fff; border: 1px solid #e0e2e8; border-radius: 4px; font-size: 14px; font-weight: 500; color: #23283c; }
.actions .plain { padding: 0 6px; }
.panels { flex: 1; min-height: 0; display: flex; gap: 6px; }
.tasks { flex: 1; min-width: 0; background: #fff; border-radius: 6px; padding: 6px 6px 0; display: flex; flex-direction: column; }
.gridbox { flex: 1; min-height: 0; display: flex; gap: 5px; }
.gridclip { flex: 1; min-width: 0; overflow: hidden; border-left: 1px solid #dcdce0; border-top: 1px solid #dcdce0; }

/* task table */
.gantt { width: 100%; table-layout: fixed; border-collapse: separate; border-spacing: 0; }
.w3 { width: 3px; } .w22 { width: 22px; } .w23 { width: 23px; } .w29 { width: 29px; } .w30 { width: 30px; } .w61 { width: 61px; } .w66 { width: 66px; } .w88 { width: 88px; } .w93 { width: 93px; } .w94 { width: 94px; } .w104 { width: 104px; } .w105 { width: 105px; } .w131 { width: 131px; }
.gantt th, .gantt td { padding: 0 4px; border-right: 1px solid #dadae0; border-bottom: 1px solid #d8d8e0; text-align: left; white-space: nowrap; overflow: hidden; height: 27px; }
.gantt tbody tr:nth-child(3n) td { height: 26px; }
.gantt tbody.tall tr:nth-child(n) td { height: 34px; }
.gantt tbody.tall tr:nth-child(6n) td { height: 33px; }
.gantt tbody .gap td { height: 7px; line-height: 0; vertical-align: top; }
.gantt .heads th { height: 59px; font-weight: 500; font-size: 13px; line-height: 16px; color: #23283c; }
.gantt .filters td { background-color: #f4f6fa; height: 26px; border-bottom: 1px solid #e0e0e6; }
.gantt td:first-child, .gantt th:first-child { text-align: center; padding: 0; }
.so { background: url("data:image/svg+xml,%3Csvg xmlns='http://www.w3.org/2000/svg' width='7' height='10'%3E%3Cpath d='M0 4l3.500-4L7 4zM0 6h7l-3.500 4z' fill='%23999'/%3E%3C/svg%3E") no-repeat right 8px center; }
.gantt .fx { background-image: url("data:image/svg+xml,%3Csvg xmlns='http://www.w3.org/2000/svg' width='8' height='8'%3E%3Cpath d='M1 1l6 6M7 1L1 7' stroke='%23888' stroke-width='2'/%3E%3C/svg%3E"); background-repeat: no-repeat; background-position: 8px center; }
.fv svg { color: #888; margin: 0 auto; }
.gantt .c { background: url("data:image/svg+xml,%3Csvg xmlns='http://www.w3.org/2000/svg' width='14' height='14' fill='none' stroke='%23999'%3E%3Cpath d='M.5 2.500h13v11H.5zM.5 5.500h13M3.500 0v4M10.500 0v4M3 8.500h2M6 8.500h2M9 8.500h2M3 11h2M6 11h2M9 11h2'/%3E%3C/svg%3E") no-repeat right 4px center; }
.gantt .filters .c { background-image: url("data:image/svg+xml,%3Csvg xmlns='http://www.w3.org/2000/svg' width='8' height='8'%3E%3Cpath d='M1 1l6 6M7 1L1 7' stroke='%23888' stroke-width='2'/%3E%3C/svg%3E"), url("data:image/svg+xml,%3Csvg xmlns='http://www.w3.org/2000/svg' width='14' height='14' fill='none' stroke='%23999'%3E%3Cpath d='M.5 2.500h13v11H.5zM.5 5.500h13M3.500 0v4M10.500 0v4M3 8.500h2M6 8.500h2M9 8.500h2M3 11h2M6 11h2M9 11h2'/%3E%3C/svg%3E"); background-position: 8px center, right 4px center; }
.bm { background: url("data:image/svg+xml,%3Csvg xmlns='http://www.w3.org/2000/svg' width='8' height='12'%3E%3Cpath d='M0 1q0-1 1-1h6q1 0 1 1v11L4 8l-4 4z' fill='%23bbb'/%3E%3C/svg%3E") no-repeat center; }
.bm.on { background-image: url("data:image/svg+xml,%3Csvg xmlns='http://www.w3.org/2000/svg' width='8' height='12'%3E%3Cpath d='M0 1q0-1 1-1h6q1 0 1 1v11L4 8l-4 4z' fill='%23ff5a26'/%3E%3C/svg%3E"); }
.gantt input { appearance: none; display: block; margin: 0 auto; width: 12px; height: 12px; border: 1px solid #999; border-radius: 50%; background: #fff; }
.gantt input:checked { border-color: #ff5a26; background: radial-gradient(circle, #ff5a26 3px, #fff 4px); }
.gantt .id { color: #b4b4b8; }
.gantt .n { text-align: right; }
.k { color: #4a86cc; }
.gantt .s { padding: 0 3px; }
.s::before { content: ""; display: block; width: 15px; height: 14px; border-radius: 50%; border: 1px solid #666; background: #fff; }
.s.y::before { background: #ffc400; border-color: #ffc400; }
.s.g::before { background: #7bd833; border-color: #7bd833; }
.s.x::before { background: #b5b5b5; border-color: #b5b5b5; }
.s.blue::before { background: #0098ff; border-color: #0098ff; }
.sliver { display: block; width: 8px; height: 2px; margin: 0 auto; background: #a9dd80; border-radius: 0 0 8px 8px; }
.gantt .l0 { padding-left: 92px; } .gantt .l1 { padding-left: 108px; } .gantt .l2 { padding-left: 125px; } .gantt .l3 { padding-left: 141px; } .gantt .l4 { padding-left: 158px; } .gantt .l5 { padding-left: 174px; }
.shut::before, .open::before { content: ""; display: inline-block; width: 6px; height: 6px; margin: 0 12px 2px -18px; border: solid #555; border-width: 1px 1px 0 0; transform: rotate(45deg); }
.open::before { transform: rotate(135deg); margin-bottom: 3px; }
.hover td { background-color: #f0f7f8; }
.hover td:first-child { background: #fff; }
.hover .l0 { background: #eee; }
.gantt .sel td { background-color: #f1f1f3; border-bottom: 2px solid #b8b8bc; border-top: 1px solid #b8b8bc; height: 27px; }
.gantt .sel .cur { background: #fff; outline: 2px solid #5aa5ea; outline-offset: -2px; color: #111; }
.vbar { width: 20px; background: #f1f1f1; border: 1px solid #e0e0e0; display: flex; flex-direction: column; }
.vbar button { height: 18px; display: grid; place-items: center; color: #999; }
.vthumb { flex: 1; background: #e8e8e8; border: solid #dcdcdc; border-width: 1px 0; }
.up { transform: rotate(180deg); } .lf { transform: rotate(90deg); } .rt { transform: rotate(-90deg); }
.hbox { display: flex; height: 18px; flex: none; gap: 5px; }
.hbar { flex: 1; display: flex; background: #f1f1f1; border: solid #e4e4e4; border-width: 1px 0; }
.hstart { width: 709px; border: 1px solid #e0e0e0; border-width: 0 1px; background: #f4f4f4; }
.hbar button { width: 17px; display: grid; place-items: center; color: #999; }
.hthumb { width: 592px; background: #dedede; }
.corner { width: 20px; background: #f4f4f4; border: 1px solid #e4e4e4; }
.tools { height: 42px; flex: none; display: flex; gap: 11px; padding: 9px 5px; }
.tools svg { width: 20px; height: 20px; fill: none; stroke: #8a8a8a; }
.tools .dim { opacity: .35; }

/* detail panel */
.detail { flex: 0 0 820px; background: #fff; border-radius: 6px 0 0 6px; padding: 16px 0 24px 21px; display: flex; flex-direction: column; justify-content: space-between; overflow: hidden; }
.dhead { display: flex; align-items: flex-start; }
.flag { color: #ff5a26; }
.dtabs { flex: 1; display: grid; grid-template-columns: 254fr 282fr 284fr; margin-right: -33px; padding-top: 12px; text-align: center; font-size: 17px; line-height: 20px; font-weight: 500; color: #b5b5b5; }
.dtabs .act { color: #1590ff; }
.comment { display: flex; align-items: center; gap: 8px; border-top: 2px solid #e4e4e8; margin-left: 4px; padding-top: 12px; position: relative; }
.ava { width: 33px; height: 33px; border-radius: 4px; background: #1fc9b6; color: #fff; font-size: 16px; line-height: 33px; text-align: center; }
.comment input { flex: 1; height: 33px; border: 1px solid #dcdcdc; border-right: 0; border-radius: 7px 0 0 7px; background: #fff; }
.clip { position: absolute; right: -2px; bottom: 5px; }
.dock { height: 7px; flex: none; background: #1c1c1e; }

/* capture window */
.win { position: absolute; top: 117px; right: 0; width: 1278px; height: 991px; display: flex; flex-direction: column; background: #efefef; border: 1px solid #b4b4b4; border-right: 0; border-radius: 8px; overflow: hidden; color: #333; font: 12px/16px "Liberation Sans", Arial, sans-serif; box-shadow: 0 22px 44px rgba(0,0,0,.42), 0 0 22px rgba(0,0,0,.22); }
.caption { height: 31px; flex: none; display: flex; align-items: center; gap: 7px; padding-left: 8px; background: #f3f3f3; color: #111; font: 12px/16px "Open Sans", "Noto Sans", sans-serif; }
.caption span { flex: 1; }
.caption button { width: 46px; height: 31px; display: grid; place-items: center; margin-left: -7px; }
.caption svg { width: 14px; height: 16px; }
.caption button svg { width: 12px; height: 12px; fill: none; stroke: #111; }
.paint { height: 33px; flex: none; display: flex; align-items: center; gap: 6px; padding: 0 11px 0 1px; border-bottom: 1px solid #dadada; }
.paint i, .send i { width: 1px; height: 28px; background: #cfcfcf; margin-left: 1px; flex: none; }
.pname { width: 66px; margin: 0 -2px 0 -2px; font: 16px/26px "Liberation Sans", sans-serif; color: #ec8410; }
.paint .on { background: #cce6fc; border: 1px solid #90c8f6; border-radius: 3px; }
.paint button svg { margin: -1px; }
.paint .on + .gl { margin-left: -2px; }
.gl { width: 24px; height: 24px; fill: none; stroke: #3f4a5a; stroke-width: 1.500; }
.car { width: 8px; height: 5px; }
.paint .sz { width: 27px; height: 25px; display: grid; place-items: center; }
.d5, .d10, .d16, .d20 { border-radius: 50%; background: #d90b0b; }
.d5 { width: 6px; height: 6px; } .d10 { width: 10px; height: 10px; } .d16 { width: 16px; height: 16px; margin-left: 12px; } .d20 { width: 20px; height: 20px; margin-left: 12px; }
.paint .d10 { margin-left: 2px; }
.shot { flex: 1; min-height: 0; display: flex; }
.page { flex: 1; min-width: 0; display: flex; flex-direction: column; background: #f0f0f0; }
.outv { width: 7px; background: linear-gradient(#c6c6c6, #c6c6c6) no-repeat 0 0 / 7px 850px #fff; }
.outh { height: 8px; flex: none; margin-right: 24px; background: #c8c8c8; box-shadow: 24px 0 #fff; }
.marks { height: 13px; flex: none; overflow: hidden; display: flex; align-items: flex-end; background: #fff; padding: 0 17px 2px 19px; gap: 22px; font: 13px/18px "Open Sans", "Noto Sans", sans-serif; color: #111; }
.marks a { display: flex; align-items: center; gap: 9px; white-space: nowrap; }
.marks a::after { content: ""; width: 7px; height: 7px; margin: 0 1px 3px; border: solid #222; border-width: 0 1px 1px 0; transform: rotate(45deg); }
.marks .bare::after { display: none; }
.green { flex: none; background: #40865c; color: #fff; }
.gtitle { height: 28px; display: flex; align-items: center; gap: 23px; padding: 0 0 0 14px; }
.gtitle svg { fill: none; stroke: #fff; }
.gtitle .p7 { margin-left: -16px; }
.gtitle b { margin-left: -19px; font-size: 12px; }
.gsave { margin-left: 9px; }
.half { opacity: .45; }
.fname { flex: 1; text-align: center; padding-right: 208px; }
.cp { width: 20px; height: 20px; border-radius: 50%; background: #dbe9e0; color: #40865c; font-size: 11px; line-height: 20px; text-align: center; }
.gtabs { height: 27px; display: flex; align-items: stretch; line-height: 27px; }
.gtabs a { padding: 0 12px; white-space: nowrap; }
.gtabs .act { background: #f0f0f0; color: #444; }
.share { height: 26px; margin: -2px 0 0; padding: 0 12px; display: flex; gap: 7px; align-items: center; border-radius: 3px; background: linear-gradient(#ffda66, #ffe98c); color: #1a1a1a; font: 13px/16px "Open Sans", "Noto Sans", sans-serif; }
.usr { margin: 4px 18px 0 26px; }
.u31 { font: 10px "Liberation Sans", sans-serif; fill: #fff; stroke: none; }
.gs { margin: 4px 0 0; }

/* ribbon */
.ribbon { height: 68px; flex: none; display: flex; padding: 8px 0 0 5px; border-bottom: 1px solid #c9c9c9; color: #888; }
.grp { height: 52px; border-right: 1px solid #d0d0d0; flex: none; }
.grp > div { height: 27px; display: flex; align-items: center; }
.grp svg, .lrail svg, .rrail svg { width: 22px; height: 20px; fill: none; stroke: currentColor; stroke-width: 1.200; color: #8a8a8a; }
.grp .dk, .rrail .dk { color: #333; }
.grp .cv, .cv { width: 10px; height: 10px; }
.grp .dk .cv { color: #333; }
.g1 { width: 65px; } .g1 svg { margin: 0 4px; }
.g2 { width: 239px; padding-left: 11px; }
.g3 { width: 156px; padding-left: 8px; } .g3 svg { margin: 0 2px; } .g3 .cv { margin: 0; }
.g4 { width: 52px; padding-left: 10px; }
.g5 { width: 72px; padding-left: 5px; } .g5 > div > svg:not(.ar) { margin: 0 5px; }
.g6 { width: 134px; padding-left: 11px; } .g6 > div { width: 113px; justify-content: space-between; }
.g7 { width: 52px; padding-left: 10px; }
.g8 { width: 81px; padding-left: 8px; border-right: 0; }
.ribbon select { appearance: none; height: 21px; border: 1px solid #dcdcdc; border-radius: 1px; padding: 0 3px; color: #aaa; background: #f4f4f4 url("data:image/svg+xml,%3Csvg xmlns='http://www.w3.org/2000/svg' width='7' height='5'%3E%3Cpath d='M.5.5l3 3 3-3' fill='none' stroke='%23999'/%3E%3C/svg%3E") no-repeat right 4px center; }
.s94 { width: 94px; margin-right: 2px !important; } .s45 { width: 45px; } .s113 { width: 113px; }
.ch { width: 22px; text-align: center; font-size: 15px; line-height: 18px; white-space: nowrap; }
.ch.sm { font-size: 13px; }
.ch sup, .ch sub { font-size: 8px; line-height: 0; }
.fr { border-bottom: 3px solid #f49a9a; border-left: 4px solid transparent; border-right: 4px solid transparent; }
.fy { background: linear-gradient(#f2f27a, #f2f27a) no-repeat center bottom / 14px 3px; height: 20px; }
.az { width: 20px; font-size: 9px; line-height: 9px; text-align: center; }
.grp .ar { width: 11px; height: 18px; }
.duo { display: flex; align-items: center; }
.styles { width: 346px; height: 51px; margin-top: 1px; border: 1px solid #dcdcdc; display: grid; grid-template-columns: 105px 105px 105px 1fr; font-size: 15px; line-height: 19px; }
.styles svg { grid-column: 4; grid-row: 1 / 3; width: 16px; height: 16px; place-self: center; color: #ccc; }
.st { margin: 2px; padding: 0 4px; overflow: hidden; white-space: nowrap; border: 1px solid transparent; }
.normal { border: 2px solid #bbb; background: #f9f9f9; margin: 0 1px; color: #888; font-size: 13px; line-height: 22px; }
.neutral { background: #f7eec8; color: #c9b27a; } .bad { background: #f7dde0; color: #cf8c92; }
.good { background: #dfeee0; color: #8bb892; } .enter { background: #f7dfcb; border-color: #aaa; color: #a9a3bd; } .result { border-color: #999; font-weight: bold; color: #999; }

/* spreadsheet */
.deck { flex: 1; min-height: 0; display: flex; }
.lrail { width: 40px; border-right: 1px solid #cbcbcb; padding-top: 20px; display: flex; flex-direction: column; align-items: center; gap: 18px; }
.lrail svg { color: #444; }
.mid { flex: 1; min-width: 0; display: flex; flex-direction: column; }
.rrail { width: 30px; border-left: 1px solid #cbcbcb; padding: 20px 0 0 9px; display: flex; flex-direction: column; gap: 18px; overflow: hidden; }
.rrail svg { width: 20px; }
.fbar { height: 20px; flex: none; display: flex; align-items: stretch; border-bottom: 1px solid #c9c9c9; background: #fff; }
.nm { width: 99px; display: flex; align-items: center; border-right: 1px solid #c9c9c9; padding-right: 6px; }
.nm input, .fin { border: 0; background: none; padding: 0 4px; min-width: 0; flex: 1; outline: 0; }
.fbar em { width: 21px; background: #f0f0f0; border-right: 1px solid #c9c9c9; text-align: center; font: italic 14px/19px "Liberation Serif", serif; color: #999; }
.fe { margin: 4px 3px; }
.sheetrow { flex: 1; min-height: 0; display: flex; margin-top: 5px; border-top: 1px solid #c9c9c9; background: #e1e1e1; }
.sheetclip { flex: 1; min-width: 0; overflow: hidden; }
.sheet { width: 1185px; table-layout: fixed; border-spacing: 0; font: 16px/20px "Liberation Serif", "Times New Roman", serif; color: #000; }
.c35 { width: 35px; } .c27 { width: 27px; } .c287 { width: 287px; } .c87 { width: 87px; } .c238 { width: 238px; }
.sheet td, .sheet th { padding: 0; height: 40px; text-align: center; vertical-align: middle; white-space: nowrap; background: #fff; box-shadow: inset -1px -1px #000; }
.sheet th { font: 13px/14px "Liberation Sans", sans-serif; color: #444; vertical-align: bottom; background: #e1e1e1; box-shadow: inset -1px -1px #c6c6c6; padding-bottom: 2px; }
.sheet .gut { background: #e1e1e1; box-shadow: inset -1px 0 #cfcfcf; }
.sheet .thick { box-shadow: inset -2px -1px #000; }
.sheet .nmx { text-align: left; padding-left: 3px; box-shadow: inset -1px 0 #7a8a3a, inset -3px -1px #000; }
.sheet .p { background: #f4cccc; } .sheet .q { background: #fff0cc; }
.sheet .lo td, .sheet .lo th { height: 21px; }
.sheet .outl td { height: 36px; background: #e1e1e1; box-shadow: none; border-bottom: 1px solid #c6c6c6; }
.sheet .outl .lv { font: 13px/15px "Liberation Sans", sans-serif; color: #444; }
.lv span { display: block; width: 16px; margin: 0 auto; border: 1px solid #c6c6c6; }
.cols .gut span { display: inline-block; width: 16px; border: 1px solid #c6c6c6; line-height: 14px; }
.sheet .outl .fz { border-left: 1px solid #7a8a3a; }
.sheet .cols th, .sheet .cols td { height: 17px; padding: 0; vertical-align: middle; font: 13px/15px "Liberation Sans", sans-serif; color: #444; }
.sheet th.on, .sheet .cols .on { background: #bfbfbf; box-shadow: inset -1px -1px #999; }
.sheet .cols .tri { background: linear-gradient(135deg, transparent 50%, #8f8f36 50%) no-repeat 13px 4px / 10px 10px #e1e1e1; }
.pm { display: block; width: 16px; height: 16px; margin: -12px auto 0; border: 1px solid #111; font: bold 14px/14px "Liberation Sans", sans-serif; color: #000; background: #e8e8e8; }
.sheet .r1 td, .sheet .r1 th { height: 21px; }
.sheet .r1 td:not(.gut), .sheet .r2 td:not(.gut) { background: #ccc; font-weight: bold; }
.sheet .r1 .t1 { font: bold 15px/18px "Liberation Sans", sans-serif; box-shadow: inset -2px -2px #000; }
.sheet .r1 .t2 { font: bold 19px/18px "Liberation Sans", sans-serif; }
.sheet a { color: #00f; text-decoration: underline; }
.sheet .r2 td, .sheet .r2 th { height: 111px; border-bottom: 1px solid #6b8230; }
.sheet .r2 .gut { background: linear-gradient(#111, #111) no-repeat 8px 57px / 1px 60px #e1e1e1; }
.sheet .r2 .gut .pm { margin: 0 0 0 1px; }
.red { color: #f00; }
.pick { outline: 2px solid #4a7d5e; outline-offset: -2px; }
.sv { width: 15px; display: flex; flex-direction: column; background: #e1e1e1; }
.sv button, .sh button { width: 13px; height: 13px; border: 1px solid #ccc; background: #f0f0f0; color: #aaa; font-size: 8px; line-height: 8px; margin: 1px; flex: none; overflow: hidden; }
.sv span { height: 211px; margin: 86px 1px auto; background: #f1f1f1; border: 1px solid #ccc; }
.sh { height: 14px; flex: none; display: flex; background: #e1e1e1; }
.sh button { height: 12px; }
.sh button:last-child { margin-right: 15px; }
.sh span { width: 992px; margin: 0 auto 0 69px; background: #f1f1f1; border: 1px solid #ccc; }
.sheets { height: 18px; flex: none; display: flex; overflow: hidden; border-top: 1px solid #c9c9c9; font-size: 11px; line-height: 25px; color: #999; padding: 0 34px 0 9px; }
.sheets svg { stroke: #333; fill: none; margin-top: 6px; }
.nav { width: 24px; flex: none; text-align: center; color: #222; }
.add { width: 60px; flex: none; margin-left: 11px; padding-left: 12px; border-left: 1px solid #c9c9c9; display: flex; gap: 10px; }
.sheets a { padding: 0 15px; border-left: 1px solid #c9c9c9; white-space: nowrap; flex: none; }
.sheets .t0 { padding-left: 2px; }
.sheets .tl { flex: 1 1 0; min-width: 0; overflow: hidden; padding-right: 0; }
.sheets b { color: #333; white-space: nowrap; margin: 0 7px; }
.sheets .saved { border-left: 1px solid #c9c9c9; padding-left: 8px; margin: 0 22px 0 0; }
.send { height: 36px; flex: none; display: flex; align-items: center; gap: 6px; padding: 0 2px 0 5px; background: #efefef; }
.send input { flex: 1; height: 23px; margin: 0 7px 0 8px; padding: 0 2px; border: 0; border-bottom: 1px solid #777; background: #fff; font: 11px/16px Roboto, "Open Sans", sans-serif; }
.send input::placeholder { color: #777; }
.imgur { height: 30px; width: 157px; flex: none; display: flex; align-items: center; gap: 4px; padding: 0 2px; border: 1px solid #0a6fc2; border-radius: 5px; background: #fdfdfd; color: #111; font: 11px/16px Roboto, "Open Sans", sans-serif; white-space: nowrap; }

/* pointers and annotations */
.hand { position: absolute; left: 235px; top: 111px; }
.plus { position: absolute; left: 1406px; top: 443px; }
.notes { position: absolute; left: 0; top: 0; pointer-events: none; }
```
